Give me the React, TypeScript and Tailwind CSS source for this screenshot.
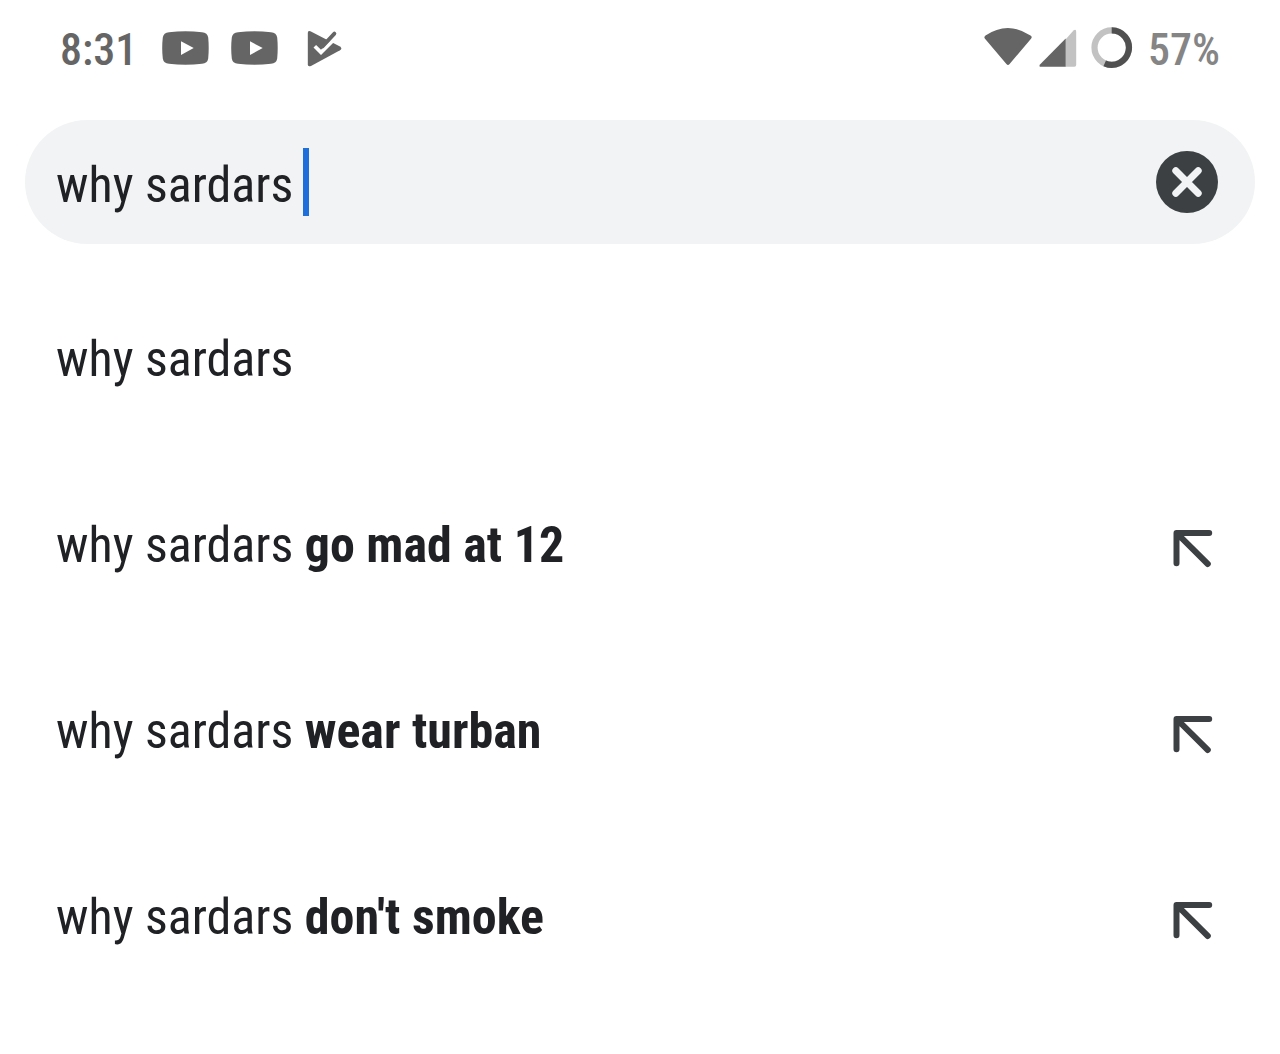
import React from "react";

const suggestions = [
  { typed: "why sardars", rest: "" },
  { typed: "why sardars", rest: "go mad at 12" },
  { typed: "why sardars", rest: "wear turban" },
  { typed: "why sardars", rest: "don't smoke" },
];

function VideoIcon() {
  return (
    <svg width="47" height="34" viewBox="0 0 47 34" className="block shrink-0">
      <path
        d="M7 1.2Q23.500 -.6 40 1.200Q45.500 1.800 46.200 6.500Q47.200 17 46.200 27.500Q45.500 32.200 40 32.800Q23.500 34.600 7 32.800Q1.500 32.200 .8 27.500Q-.4 17 .8 6.500Q1.500 1.800 7 1.200Z"
        fill="#656565"
      />
      <path d="M19 10.300L31.700 17.100L19 23.900Z" fill="#fff" />
    </svg>
  );
}

function PlayCheckIcon() {
  return (
    <svg width="36" height="37" viewBox="0 0 36 37" className="block shrink-0">
      <path
        d="M.8 3Q.8 .2 3.400 1.300L33 16.600Q35.600 18.400 33 20.200L4 35.900Q.8 37.200 .8 34.500Z"
        fill="#656565"
      />
      <path d="M7.800 16.300L14 22.400L30 6.400" fill="none" stroke="#fff" strokeWidth="3.700" />
      <path d="M15.500 16.400L27.400 3.600" fill="none" stroke="#656565" strokeWidth="3.800" strokeLinecap="round" />
    </svg>
  );
}

function StatusIcons() {
  return (
    <svg width="164" height="44" viewBox="984 26 164 44" className="block">
      <path
        d="M985.500 35.500Q1007.800 20.500 1030.500 35.500Q1032.600 37 1031 38.800L1009.600 64Q1008 65.800 1006.400 64L985 38.800Q983.500 37 985.500 35.500Z"
        fill="#656565"
      />
      <path d="M1065.500 39.500L1073.500 30.500Q1076.200 28.500 1076.200 32V65Q1076.200 66.800 1074.400 66.800H1065.500Z" fill="#c2c2c2" />
      <path d="M1065.700 38.500V66.800H1041Q1038.500 66.800 1040 64.500Z" fill="#656565" />
      <circle cx="1111.700" cy="47.600" r="17.200" fill="none" stroke="#c2c2c2" strokeWidth="6.200" />
      <path d="M1111.700 30.400A17.200 17.200 0 1 1 1104.700 63.300" fill="none" stroke="#505050" strokeWidth="6.200" />
    </svg>
  );
}

function InsertIcon() {
  return (
    <svg width="42" height="42" viewBox="0 0 42 42" className="mt-[6px] block">
      <path
        d="M5.500 36.200V5.900H38.200M6.500 6.900L36.800 37"
        fill="none"
        stroke="#3c4043"
        strokeWidth="6"
        strokeLinecap="round"
        strokeLinejoin="round"
      />
    </svg>
  );
}

export default function App() {
  return (
    <div className="h-[1054px] w-[1280px] overflow-hidden bg-white font-['Roboto_Condensed','Roboto',sans-serif] text-[#202124] [font-stretch:75%]">
      <header className="flex h-[96px] items-center justify-between pr-[61px] pl-[60px]">
        <div className="flex items-center">
          <span className="w-[102px] pt-[3px] text-[44px] leading-none font-medium text-[#656565]">8:31</span>
          <VideoIcon />
          <span className="w-[22px]" />
          <VideoIcon />
          <span className="w-[29px]" />
          <PlayCheckIcon />
        </div>
        <div className="flex items-center">
          <StatusIcons />
          <span className="-mr-px w-[72px] pt-[3px] text-[44px] leading-none font-medium text-[#858585]">57%</span>
        </div>
      </header>
      <div className="mx-[25px] mt-[24px] flex h-[124px] items-center justify-between rounded-full bg-[#f1f3f4] pr-[37px] pl-[31px]">
        <div className="flex items-center">
          <span className="w-[247px] pt-[6px] text-[50px] leading-none">why sardars</span>
          <span className="h-[68px] w-[6px] bg-[#1f6fdb]" />
        </div>
        <svg width="62" height="62" viewBox="0 0 62 62" className="block">
          <circle cx="31" cy="31" r="31" fill="#3c4043" />
          <path d="M19.800 19.800L42.200 42.200M42.200 19.800L19.800 42.200" stroke="#f1f3f4" strokeWidth="7" strokeLinecap="round" />
        </svg>
      </div>
      <ul className="mt-[22px]">
        {suggestions.map((s) => (
          <li key={s.rest} className="flex h-[186px] items-center justify-between pr-[67px] pl-[56px]">
            <span className="text-[50px] leading-none whitespace-pre">
              {s.typed} <b className="font-bold">{s.rest}</b>
            </span>
            {s.rest && <InsertIcon />}
          </li>
        ))}
      </ul>
    </div>
  );
}
